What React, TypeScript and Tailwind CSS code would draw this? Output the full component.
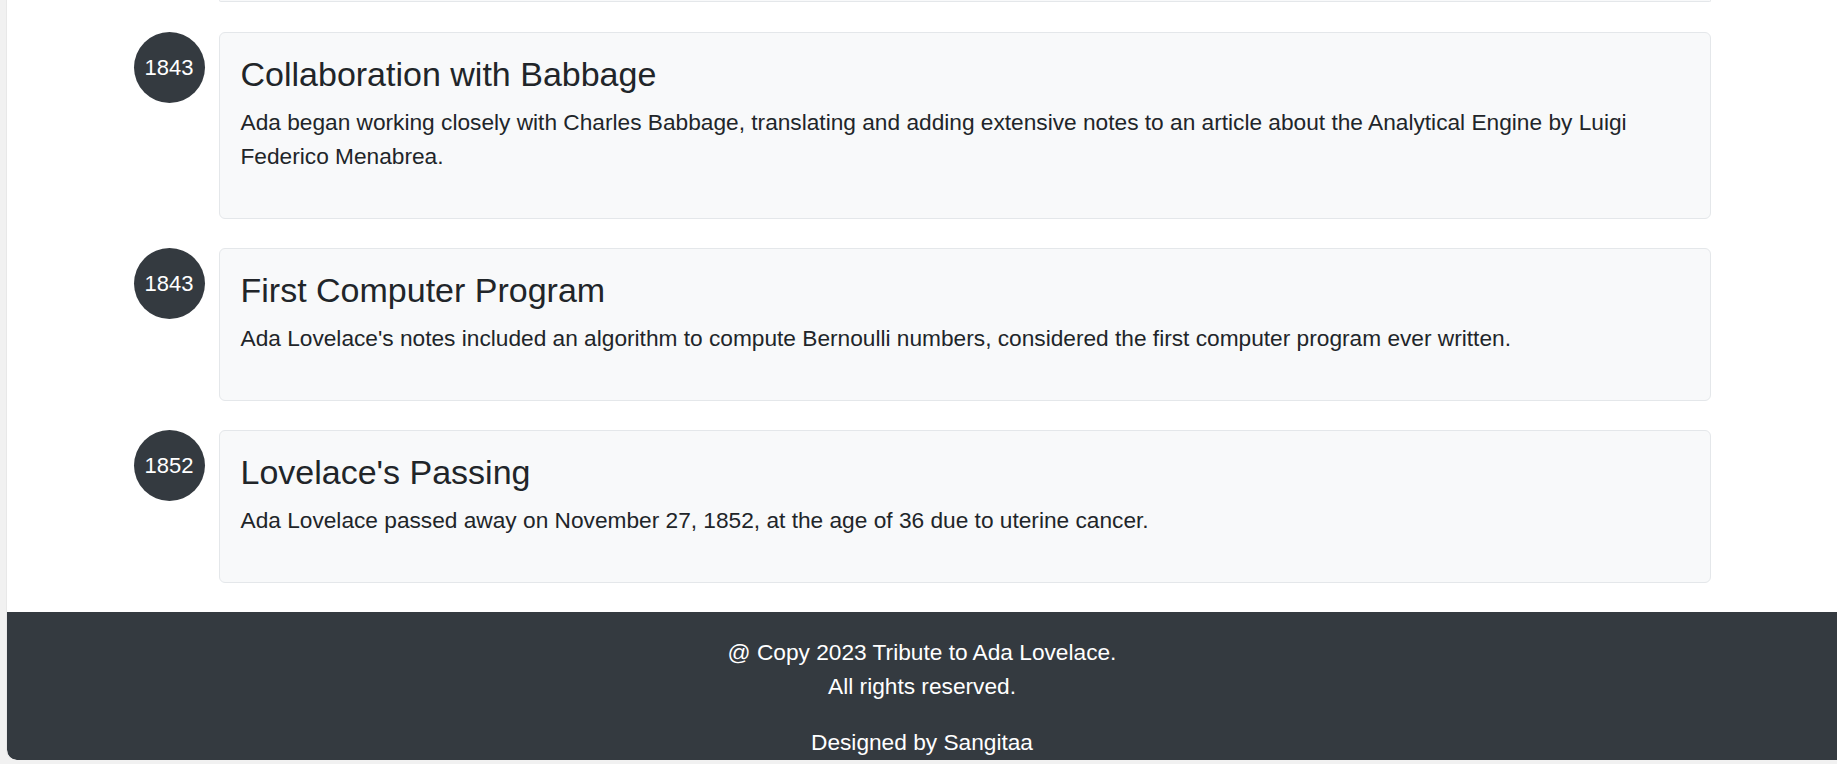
const events = [
  {
    year: "1843",
    title: "Collaboration with Babbage",
    text: "Ada began working closely with Charles Babbage, translating and adding extensive notes to an article about the Analytical Engine by Luigi Federico Menabrea.",
  },
  {
    year: "1843",
    title: "First Computer Program",
    text: "Ada Lovelace's notes included an algorithm to compute Bernoulli numbers, considered the first computer program ever written.",
  },
  {
    year: "1852",
    title: "Lovelace's Passing",
    text: "Ada Lovelace passed away on November 27, 1852, at the age of 36 due to uterine cancer.",
  },
];

function TimelineItem({ year, title, text }: { year: string; title: string; text: string }) {
  return (
    <div className="flex items-start gap-[14px]">
      <div className="w-[71px] h-[71px] shrink-0 rounded-full bg-[#343a40] text-white flex items-center justify-center text-[22px]">
        {year}
      </div>
      <div className="flex-1 bg-[#f8f9fa] border border-[#e4e7ea] rounded-[6px] p-[21px]">
        <h4 className="text-[34px] leading-[1.2] mb-[10px] text-[#212529]">{title}</h4>
        <p className="text-[22.7px] leading-[1.5] mb-[24px] text-[#212529]">{text}</p>
      </div>
    </div>
  );
}

export default function App() {
  return (
    <div
      className="h-[764px] overflow-hidden bg-[#f1f1f1] pl-[6px] pb-[4px]"
      style={{ fontFamily: '"Liberation Sans", Arial, sans-serif' }}
    >
      <div className="h-full bg-white rounded-bl-[10px] overflow-hidden flex flex-col border-l border-[#e8e8e8]">
        <main className="max-w-[1577px] w-full mx-auto pb-[29px]">
          <div className="ml-[85px] h-[2px] bg-[#f8f9fa] border border-t-0 border-[#e4e7ea] rounded-b-[6px]" />
          <div className="flex flex-col gap-[29px] mt-[30px]">
            {events.map((e, i) => (
              <TimelineItem key={i} {...e} />
            ))}
          </div>
        </main>
        <footer className="flex-1 bg-[#343a40] text-white text-center text-[22.7px] leading-[34px] pt-[23px] rounded-bl-[10px]">
          <p className="mb-[22px]">
            @ Copy 2023 Tribute to Ada Lovelace.
            <br />
            All rights reserved.
          </p>
          <p>Designed by Sangitaa</p>
        </footer>
      </div>
    </div>
  );
}
